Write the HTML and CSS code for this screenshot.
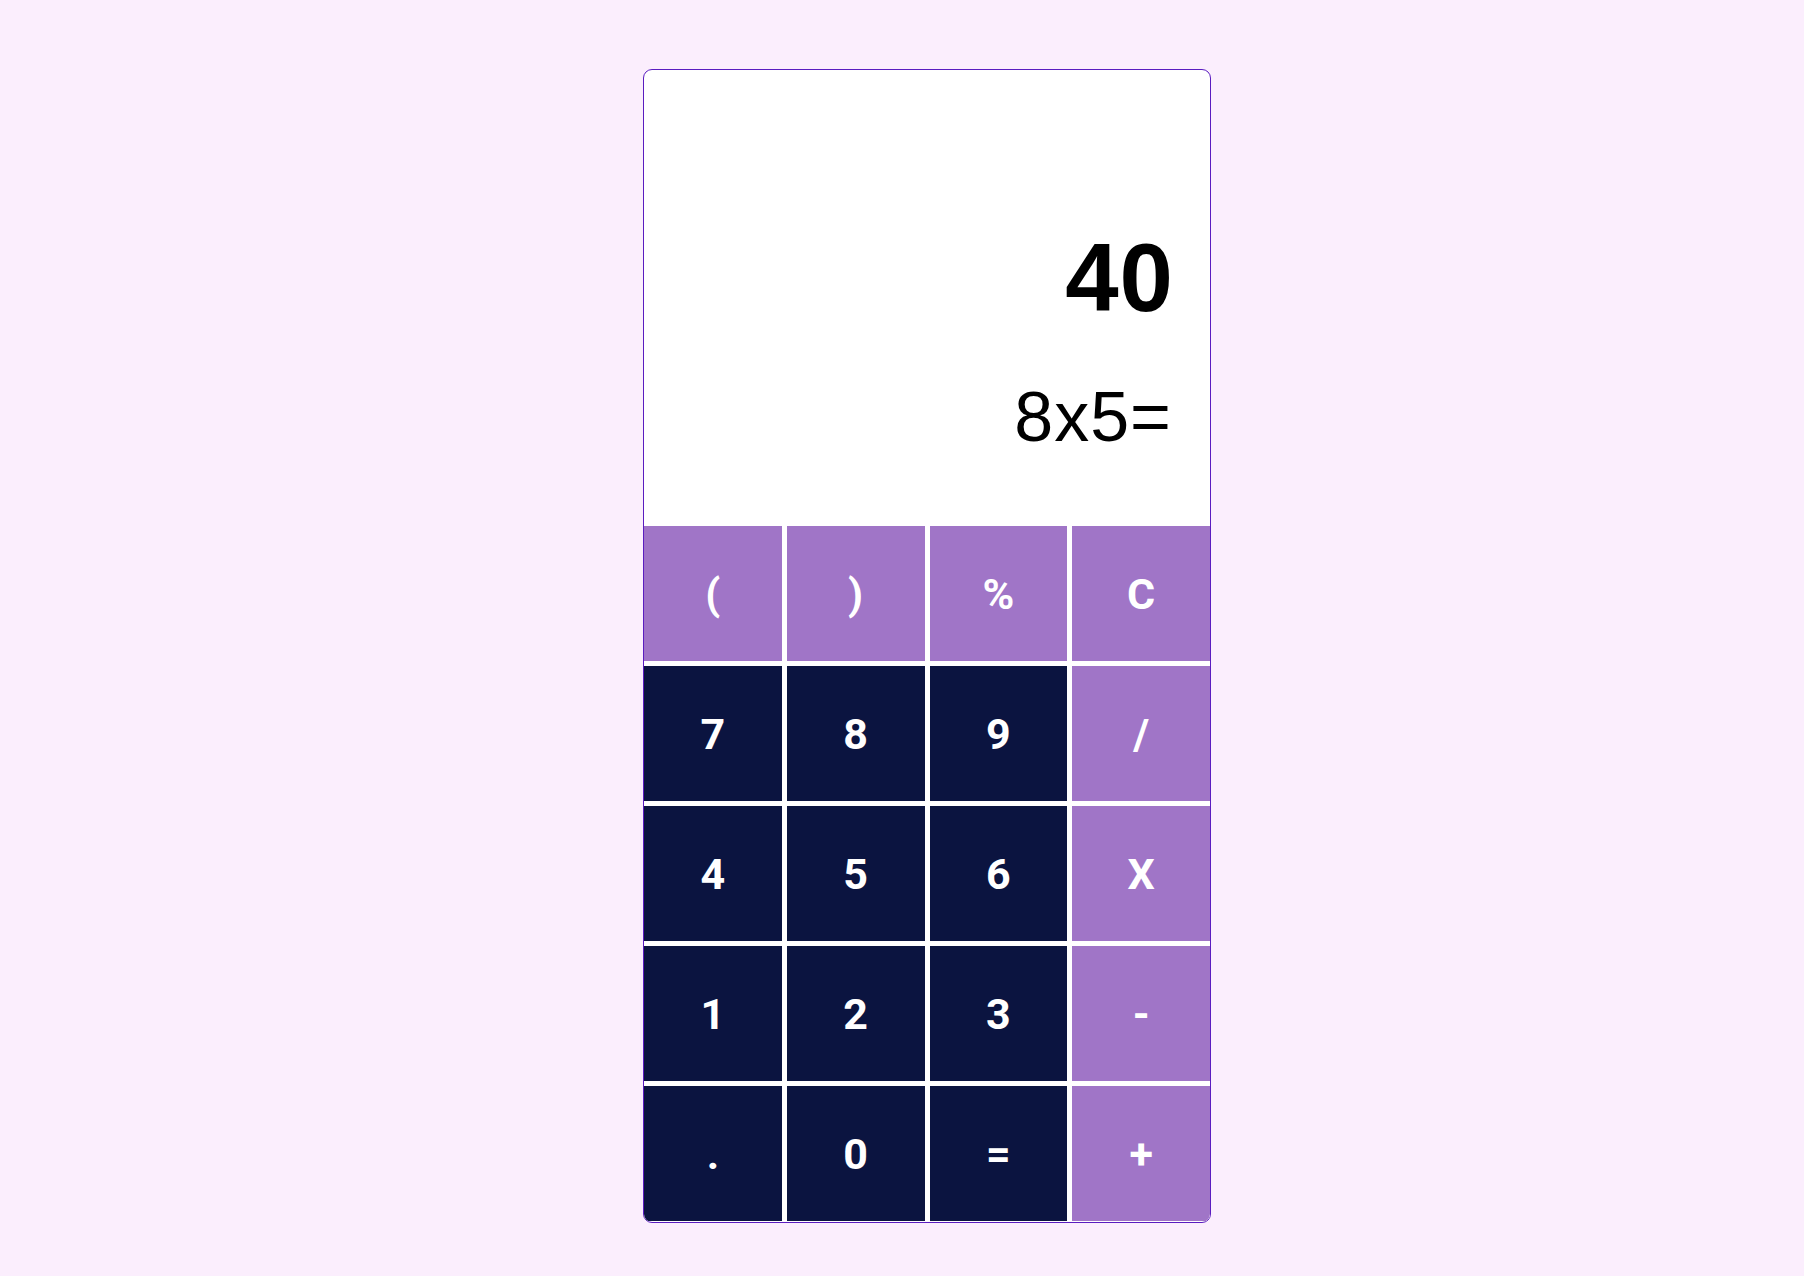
FILE: index.html
```html
<!DOCTYPE html>
<html lang="en">
<head>
<meta charset="utf-8">
<title>Calculator</title>
<link rel="stylesheet" href="styles.css">
</head>
<body>
<main class="page">
  <div class="calculator">
    <div class="display">
      <div class="result">40</div>
      <div class="expression">8x5=</div>
    </div>
    <div class="keys">
      <button class="key op">(</button>
      <button class="key op">)</button>
      <button class="key op">%</button>
      <button class="key op">C</button>
      <button class="key num">7</button>
      <button class="key num">8</button>
      <button class="key num">9</button>
      <button class="key op">/</button>
      <button class="key num">4</button>
      <button class="key num">5</button>
      <button class="key num">6</button>
      <button class="key op">X</button>
      <button class="key num">1</button>
      <button class="key num">2</button>
      <button class="key num">3</button>
      <button class="key op">-</button>
      <button class="key num">.</button>
      <button class="key num">0</button>
      <button class="key num">=</button>
      <button class="key op">+</button>
    </div>
  </div>
</main>
</body>
</html>
```
FILE: styles.css
```css
* { box-sizing: border-box; }
html, body {
  margin: 0;
  padding: 0;
  background: #fbeefd;
  font-family: Roboto, "Liberation Sans", sans-serif;
}
.page {
  display: flex;
  justify-content: center;
  padding: 69px 0 0 50px;
  min-height: 1276px;
}
.calculator {
  width: 568px;
  height: 1154px;
  border: 1.5px solid #5a1cc0;
  border-radius: 9px;
  background: #ffffff;
  overflow: hidden;
  display: flex;
  flex-direction: column;
}
.display {
  height: 456px;
  padding: 160px 0 0 0;
  text-align: right;
  color: #000;
  font-family: "Liberation Sans", Arial, sans-serif;
}
.result {
  padding-right: 36px;
  font-size: 96px;
  font-weight: 700;
  line-height: 96px;
  letter-spacing: 1px;
}
.expression {
  padding-right: 38px;
  margin-top: 56px;
  font-size: 70px;
  font-weight: 400;
  line-height: 70px;
  letter-spacing: 1px;
}
.keys {
  display: grid;
  grid-template-columns: repeat(4, 1fr);
  grid-auto-rows: 135px;
  gap: 5px;
  background: #ffffff;
}
.key {
  border: none;
  margin: 0;
  padding: 0;
  font-family: Roboto, "Liberation Sans", sans-serif;
  font-size: 43px;
  font-weight: 700;
  color: #ffffff;
  display: flex;
  align-items: center;
  justify-content: center;
}
.op { background: #a075c7; }
.num { background: #0b1440; }
```
